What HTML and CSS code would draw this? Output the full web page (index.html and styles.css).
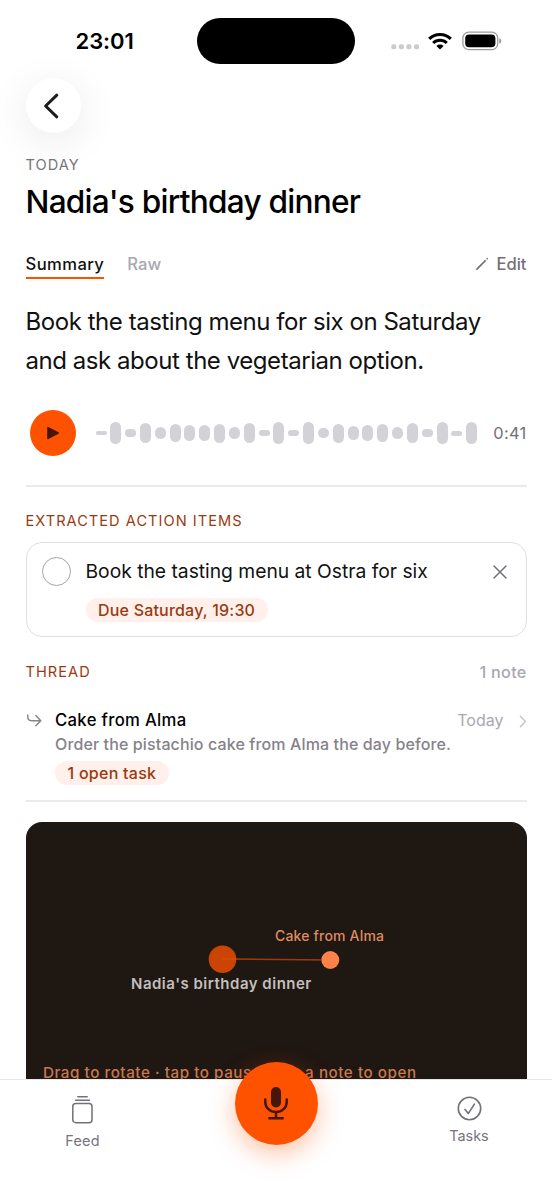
FILE: index.html
```html
<!DOCTYPE html>
<html lang="en">
<head>
<meta charset="utf-8">
<title>Nadia's birthday dinner</title>
<link rel="stylesheet" href="styles.css">
</head>
<body>
<div class="phone">
  <header class="status">
    <span class="clock">23:01</span>
    <span class="island"></span>
    <span class="indicators">
      <svg class="signal" width="29" height="6" viewBox="0 0 29 6"><g fill="#cbcbcb"><rect x="0.3" y="0.3" width="5" height="5" rx="1.8"/><rect x="7.9" y="0.3" width="5" height="5" rx="1.8"/><rect x="15.4" y="0.3" width="5" height="5" rx="1.8"/><rect x="23" y="0.3" width="5" height="5" rx="1.8"/></g></svg>
      <svg class="wifi" width="24" height="18" viewBox="0 0 24 18"><g fill="none" stroke="#000" stroke-width="3.1"><path d="M1.2 6.9a15.4 15.4 0 0 1 21.6 0"/><path d="M5.2 11a9.7 9.7 0 0 1 13.6 0"/></g><path d="M12 17.6 8.4 14a5.1 5.1 0 0 1 7.2 0z"/></svg>
      <svg class="battery" width="40" height="20" viewBox="0 0 40 20"><rect x=".9" y="1.2" width="34.8" height="17.4" rx="5.8" fill="none" stroke="#9c9c9c" stroke-width="1.3"/><rect x="3.2" y="3.5" width="30.2" height="12.8" rx="4" fill="#000"/><path d="M37.4 7.2c2.4.7 2.4 4.8 0 5.5z" fill="#8e8e8e"/></svg>
    </span>
  </header>

  <main class="note">
    <button class="back" aria-label="Back"><svg width="16" height="26" viewBox="0 0 16 26"><path d="M13.8 2.2 2.6 13l11.2 10.8" fill="none" stroke="#1c1c1e" stroke-width="3" stroke-linecap="round" stroke-linejoin="round"/></svg></button>
    <div class="date">TODAY</div>
    <h1 class="title">Nadia's birthday dinner</h1>

    <nav class="tabs">
      <span class="tab active">Summary</span>
      <span class="tab">Raw</span>
      <span class="edit"><svg width="14" height="14" viewBox="0 0 14 14"><path d="M1.2 12.9 1.8 11.2 10.2 2.9 11.1 3.8 2.8 12.2z" fill="#737078" stroke="#737078" stroke-width=".5"/><path d="m11.2 1.7.7-.7q.5-.3.9.1t.1.9l-.7.7z" fill="#737078"/></svg>Edit</span>
    </nav>

    <p class="summary"><span>Book the tasting menu for six on Saturday</span><br><span>and ask about the vegetarian option.</span></p>

    <div class="player">
      <span class="play"><svg width="14" height="14" viewBox="0 0 14 14"><path d="M2 1.6v10.8L12.2 7z" fill="#45160a" stroke="#45160a" stroke-width="1.6" stroke-linejoin="round"/></svg></span>
      <span class="wave">
        <i style="height:4px"></i><i style="height:22px"></i><i style="height:8px"></i><i style="height:20px"></i><i style="height:12.5px"></i><i style="height:18px"></i><i style="height:16.5px"></i><i style="height:15.5px"></i><i style="height:19px"></i><i style="height:11.5px"></i><i style="height:20.5px"></i><i style="height:6px"></i><i style="height:22px"></i><i style="height:6px"></i><i style="height:22px"></i><i style="height:10px"></i><i style="height:19px"></i><i style="height:14px"></i><i style="height:16px"></i><i style="height:18px"></i><i style="height:12.5px"></i><i style="height:20.5px"></i><i style="height:8.5px"></i><i style="height:22px"></i><i style="height:5px"></i><i style="height:22px"></i>
      </span>
      <span class="duration">0:41</span>
    </div>
    <div class="rule"></div>

    <h2 class="section items-heading">EXTRACTED ACTION ITEMS</h2>
    <section class="card">
      <span class="check"></span>
      <div class="card-body">
        <span class="card-title">Book the tasting menu at Ostra for six</span>
        <span class="pill due">Due Saturday, 19:30</span>
      </div>
      <svg class="dismiss" width="14" height="14" viewBox="0 0 14 14"><path d="m1 1 12 12M13 1 1 13" stroke="#737078" stroke-width="1.5" stroke-linecap="round"/></svg>
    </section>

    <div class="thread-head"><h2 class="section">THREAD</h2><span class="count">1 note</span></div>
    <section class="thread">
      <svg class="reply" width="15" height="13" viewBox="0 0 15 13"><path d="M.8.9v2.2q0 3.6 3.6 3.6H13.6M8.8 1.6l5 5.1-5 5" fill="none" stroke="#85828a" stroke-width="1.4" stroke-linecap="round" stroke-linejoin="round"/></svg>
      <div class="thread-body">
        <div class="thread-top"><span class="thread-title">Cake from Alma</span><span class="when">Today</span><svg class="chevron" width="8" height="13" viewBox="0 0 8 13"><path d="m1.4 1.2 5 5.3-5 5.3" fill="none" stroke="#c7c6cb" stroke-width="1.5" stroke-linecap="round" stroke-linejoin="round"/></svg></div>
        <div class="desc">Order the pistachio cake from Alma the day before.</div>
        <span class="pill open">1 open task</span>
      </div>
    </section>
    <div class="rule"></div>

    <section class="graph">
      <svg class="edges" width="501" height="258" viewBox="0 0 501 258"><circle cx="196.5" cy="137.2" r="13.8" fill="#ca4504"/><path d="M196.5 136.9 304 138" stroke="#e34d04" stroke-opacity=".65" stroke-width="1.6"/><circle cx="304.3" cy="138" r="9.6" fill="#1f1712"/><circle cx="304.3" cy="138" r="9" fill="#fd8248"/></svg>
      <span class="node cake">Cake from Alma</span>
      <span class="node dinner">Nadia's birthday dinner</span>
      <span class="hint">Drag to rotate · tap to pause · tap a note to open</span>
    </section>
  </main>

  <footer class="tabbar">
    <div class="dest feed"><svg width="23" height="29" viewBox="0 0 23 29"><g fill="none" stroke="#737078" stroke-linecap="round" stroke-width="1.5"><path d="M6.8 1.8h9.4M4.6 5.2h13.8"/><rect x="1.8" y="8.5" width="19.2" height="19.2" rx="3"/></g></svg><span>Feed</span></div>
    <button class="record" aria-label="Record"><svg width="26" height="34" viewBox="0 0 26 34"><rect x="8" y="1" width="10" height="20.5" rx="5" fill="#45160a"/><path d="M2.3 13.5v2.7a10.7 9.8 0 0 0 21.4 0v-2.7M13 26v6M6.3 32.3h13.4" fill="none" stroke="#45160a" stroke-width="2.5" stroke-linecap="round"/></svg></button>
    <div class="dest tasks"><svg width="25" height="25" viewBox="0 0 25 25"><g fill="none" stroke="#737078" stroke-width="1.6" stroke-linecap="round" stroke-linejoin="round"><circle cx="12.5" cy="12.5" r="11.2"/><path d="m8 13.4 3.4 4 6-9.3"/></g></svg><span>Tasks</span></div>
  </footer>
</div>
</body>
</html>
```
FILE: styles.css
```css
* { box-sizing: border-box; }
body { margin: 0; background: #fff; font-family: Inter, "Liberation Sans", sans-serif; color: #000; }
h1, h2, p { margin: 0; font-weight: 400; }
button { border: 0; padding: 0; }
svg { display: block; flex: none; }
span { white-space: nowrap; }

.phone { width: 552px; height: 1200px; overflow: hidden; display: flex; flex-direction: column; }
.status { flex: none; height: 78px; padding: 17.5px 50px 0 75.5px; display: flex; align-items: flex-start; }
.clock { width: 121.5px; font-size: 22px; line-height: 47px; font-weight: 600; letter-spacing: -.05px; }
.island { width: 157.5px; height: 46.5px; border-radius: 24px; background: #000; }
.indicators { display: flex; align-items: center; height: 47px; margin-left: 36px; }
.signal { margin: 11px 8.5px 0 0; }
.wifi { margin-right: 9.5px; }

.note { flex: none; height: 1079px; overflow: hidden; padding: 78px 25.5px 0; margin-top: -78px; display: flex; flex-direction: column; }
.note > * { flex: none; }
.back { width: 55px; height: 55px; border-radius: 50%; background: #fff; display: flex; align-items: center; justify-content: center; padding-right: 4px; box-shadow: 0 8px 40px rgba(0, 0, 0, .09); }
.date { margin-top: 22px; font-size: 14.6px; line-height: 20px; letter-spacing: 1.05px; color: #77747c; }
.title { margin-top: 7px; font-size: 31.6px; line-height: 40px; font-weight: 500; letter-spacing: -.76px; white-space: nowrap; }
.tabs { margin-top: 32px; height: 25px; display: flex; font-size: 16.6px; line-height: 20px; font-weight: 500; }
.tab { color: #a9a7af; }
.tab.active { color: #111; letter-spacing: .43px; border-bottom: 2.5px solid #ff5200; margin-right: 23px; }
.edit { margin-left: auto; display: flex; align-items: center; gap: 7px; height: 20px; color: #737078; }
.summary { margin-top: 23px; font-size: 24px; line-height: 39px; letter-spacing: -.45px; color: #111; }
.player { margin-top: 30px; height: 46px; display: flex; align-items: center; padding-left: 4.5px; }
.play { width: 46px; height: 46px; border-radius: 50%; background: #ff5200; display: flex; align-items: center; justify-content: center; }
.wave { width: 382px; margin-left: 19.5px; display: flex; align-items: center; justify-content: space-between; }
.wave i { width: 11px; border-radius: 5.5px; background: #d3d2d7; }
.duration { margin-left: auto; font-size: 16.4px; letter-spacing: .3px; color: #737078; }
.rule { height: 2px; background: #ebebed; margin-top: 29px; }

.section { font-size: 14.6px; line-height: 20px; letter-spacing: 1.03px; color: #9a3a10; white-space: nowrap; }
.items-heading { margin-top: 24px; }
.card { margin-top: 11px; height: 95px; border: 1px solid #e0dfe2; border-radius: 16px; display: flex; align-items: flex-start; padding: 14px 19px 0 15.5px; }
.check { width: 29px; height: 29px; border: 1.4px solid #a5a3ac; border-radius: 50%; }
.card-body { display: flex; flex-direction: column; align-items: flex-start; margin-left: 14.5px; flex: 1; }
.card-title { font-size: 19.3px; line-height: 29px; letter-spacing: -.02px; color: #111; }
.pill { display: block; height: 24.5px; line-height: 24.5px; border-radius: 13px; background: #fff0eb; color: #9a3a10; font-size: 16px; font-weight: 500; letter-spacing: .2px; padding: 0 12.5px; }
.due { margin-top: 11.5px; }
.dismiss { margin-top: 7.5px; }
.thread-head { margin-top: 25px; display: flex; justify-content: space-between; }
.count { font-size: 16.2px; line-height: 20px; letter-spacing: .25px; color: #a9a7af; font-weight: 500; }
.thread { margin-top: 28px; display: flex; align-items: flex-start; }
.reply { margin: 4px 0 0 1px; }
.thread-body { flex: 1; margin-left: 13.5px; }
.thread-top { display: flex; align-items: center; height: 20px; font-size: 16.7px; line-height: 20px; }
.thread-title { font-weight: 500; letter-spacing: .32px; }
.when { margin-left: auto; margin-right: 15px; color: #a9a7af; font-size: 16px; }
.chevron { margin-top: 2px; }
.desc { margin-top: 2px; font-size: 16px; line-height: 24px; font-weight: 500; letter-spacing: .12px; color: #85828a; }
.open { width: fit-content; margin-top: 4.5px; letter-spacing: .26px; }
.thread + .rule { margin-top: 15px; }
.graph { position: relative; margin-top: 20px; height: 300px; border-radius: 16px 16px 0 0; background: #1f1712; }
.node, .hint { position: absolute; line-height: 20px; }
.cake { left: 249.5px; top: 103.5px; font-size: 14px; font-weight: 500; letter-spacing: .18px; color: #df8b62; }
.dinner { left: 105.5px; top: 152px; font-size: 15px; font-weight: 600; letter-spacing: .5px; color: #c2bfbd; }
.hint { left: 17.5px; top: 240.5px; font-size: 15.2px; font-weight: 500; letter-spacing: .55px; color: #c97850; }

.tabbar { flex: none; height: 121px; position: relative; border-top: 1.5px solid #e7e7e9; background: #fff; display: flex; justify-content: space-between; padding: 0 62px 0 65px; }
.dest { display: flex; flex-direction: column; align-items: center; font-size: 14.4px; line-height: 20px; color: #77747c; }
.feed { padding-top: 15px; width: 35px; }
.feed span { margin-top: 7px; letter-spacing: .2px; }
.tasks { padding-top: 15.5px; width: 42px; }
.tasks span { margin-top: 5px; }
.record { position: relative; margin-top: -18.5px; left: 2px; width: 83px; height: 83px; border-radius: 50%; background: #ff5200; display: flex; align-items: center; justify-content: center; box-shadow: 0 8px 26px rgba(255, 82, 0, .36); }
```
